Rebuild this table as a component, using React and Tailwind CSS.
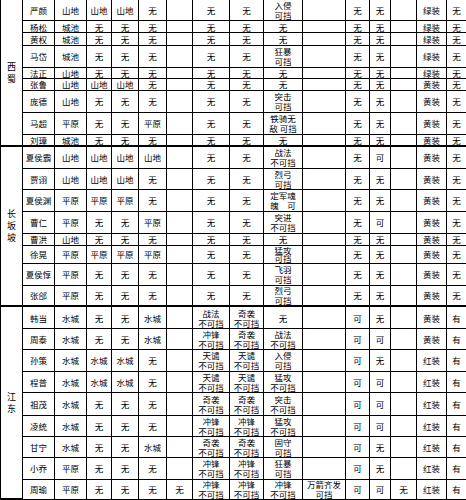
import React from "react";

const W = "无";
const data = [
  ["严颜", "山地", "山地", "山地", W, "", W, W, "入侵\n可挡", "", W, W, "", "绿装", W],
  ["杨松", "城池", W, W, W, "", W, W, W, "", W, W, "", "绿装", W],
  ["黄权", "城池", W, W, W, "", W, W, W, "", W, W, "", "绿装", W],
  ["马岱", "城池", W, W, W, "", W, W, "狂暴\n可挡", "", W, W, "", "绿装", W],
  ["法正", "山地", W, W, W, "", W, W, W, "", W, W, "", "绿装", W],
  ["张鲁", "山地", "山地", "山地", W, "", W, W, W, "", W, W, "", "黄装", W],
  ["庞德", "山地", W, W, W, "", W, W, "突击\n可挡", "", W, W, "", "黄装", W],
  ["马超", "平原", W, W, "平原", "", W, W, "铁骑无\n敌 可挡", "", W, W, "", "黄装", W],
  ["刘璋", "城池", W, W, W, "", W, W, W, "", W, W, "", "黄装", W],
  ["夏侯霸", "山地", "山地", "山地", "山地", "", W, W, "战法\n不可挡", "", W, "可", "", "黄装", W],
  ["贾诩", "山地", "山地", "山地", W, "", W, W, "烈弓\n可挡", "", W, W, "", "黄装", W],
  ["夏侯渊", "平原", "平原", "平原", W, "", W, W, "定军魂\n魄　可", "", W, W, "", "黄装", W],
  ["曹仁", "平原", W, W, "平原", "", W, W, "突进\n不可挡", "", W, "可", "", "黄装", W],
  ["曹洪", "山地", W, W, W, "", W, W, W, "", W, W, "", "黄装", W],
  ["徐晃", "平原", "平原", "平原", "平原", "", W, W, "猛攻\n可挡", "", W, W, "", "黄装", W],
  ["夏侯惇", "平原", W, W, W, "", W, W, "飞羽\n可挡", "", W, W, "", "黄装", W],
  ["张郃", "平原", W, W, W, "", W, W, "烈弓\n可挡", "", W, W, "", "黄装", W],
  ["韩当", "水城", W, W, "水城", "", "战法\n不可挡", "奇袭\n不可挡", W, "", "可", W, "", "黄装", "有"],
  ["周泰", "水城", W, W, "水城", "", "冲锋\n不可挡", "奇袭\n不可挡", "战法\n不可挡", "", "可", "可", "", "黄装", "有"],
  ["孙策", "水城", "水城", "水城", W, "", "天谴\n不可挡", "天谴\n不可挡", "入侵\n可挡", "", "可", W, "", "红装", "有"],
  ["程普", "水城", "水城", "水城", W, "", "天谴\n不可挡", "天谴\n不可挡", "猛攻\n不可挡", "", "可", "可", "", "红装", "有"],
  ["祖茂", "水城", W, W, W, "", "奇袭\n不可挡", "奇袭\n不可挡", "突击\n不可挡", "", "可", "可", "", "红装", "有"],
  ["凌统", "水城", W, W, W, "", "冲锋\n不可挡", "冲锋\n不可挡", "猛攻\n不可挡", "", "可", "可", "", "红装", "有"],
  ["甘宁", "水城", W, W, "水城", "", "奇袭\n不可挡", "奇袭\n不可挡", "固守\n可挡", "", "可", W, "", "红装", "有"],
  ["小乔", "平原", W, W, W, "", "冲锋\n不可挡", "冲锋\n不可挡", "狂暴\n可挡", "", "可", W, "", "红装", "有"],
  ["周瑜", "平原", W, W, W, W, "冲锋\n不可挡", "冲锋\n不可挡", "冲锋\n不可挡", "万箭齐发\n可挡", "可", "可", W, "红装", "有"],
];

const groups = [
  { name: "西蜀", start: 0, span: "row-span-9" },
  { name: "长坂坡", start: 9, span: "row-span-8" },
  { name: "江东", start: 17, span: "row-span-9" },
];

const sepRows = new Set([8, 16]);
const tightRows = new Set([14]);

export default function App() {
  const cells = [];
  data.forEach((row, r) => {
    const g = groups.find((x) => x.start === r);
    if (g) {
      cells.push(
        <div
          key={"g" + r}
          className={`${g.span} col-start-1 flex flex-col items-center justify-center gap-[1px] border-r border-b-2 border-black text-[9px] leading-[11px]`}
        >
          {g.name.split("").map((c, i) => (
            <span key={i} className="block">
              {c}
            </span>
          ))}
        </div>
      );
    }
    row.forEach((t, c) => {
      cells.push(
        <div
          key={r + "-" + c}
          className={`flex items-center justify-center whitespace-pre-line text-center border-r border-black text-[8.5px] ${
            tightRows.has(r) ? "leading-[8.5px]" : "leading-[10px]"
          } ${sepRows.has(r) ? "border-b-2" : "border-b"} ${c === 0 ? "col-start-2" : ""}`}
        >
          {t}
        </div>
      );
    });
  });

  return (
    <div
      className="w-[466px] h-[500px] overflow-hidden bg-white text-black"
      style={{ fontFamily: '"Noto Sans CJK SC", "Noto Sans", sans-serif' }}
    >
      <div className="grid grid-cols-[22px_32px_32px_25px_27px_28px_26px_37px_34px_39px_43px_24px_21px_26px_30px_20px] grid-rows-[21px_12.3px_12.7px_21.7px_11.3px_11.7px_22.3px_22px_11.7px_22.3px_21px_21.7px_22.3px_11.7px_18.3px_21.7px_21.6px_21.7px_21px_21.7px_21.6px_22.4px_21px_21.6px_21.7px_20px] border-l border-black">
        {cells}
      </div>
    </div>
  );
}
